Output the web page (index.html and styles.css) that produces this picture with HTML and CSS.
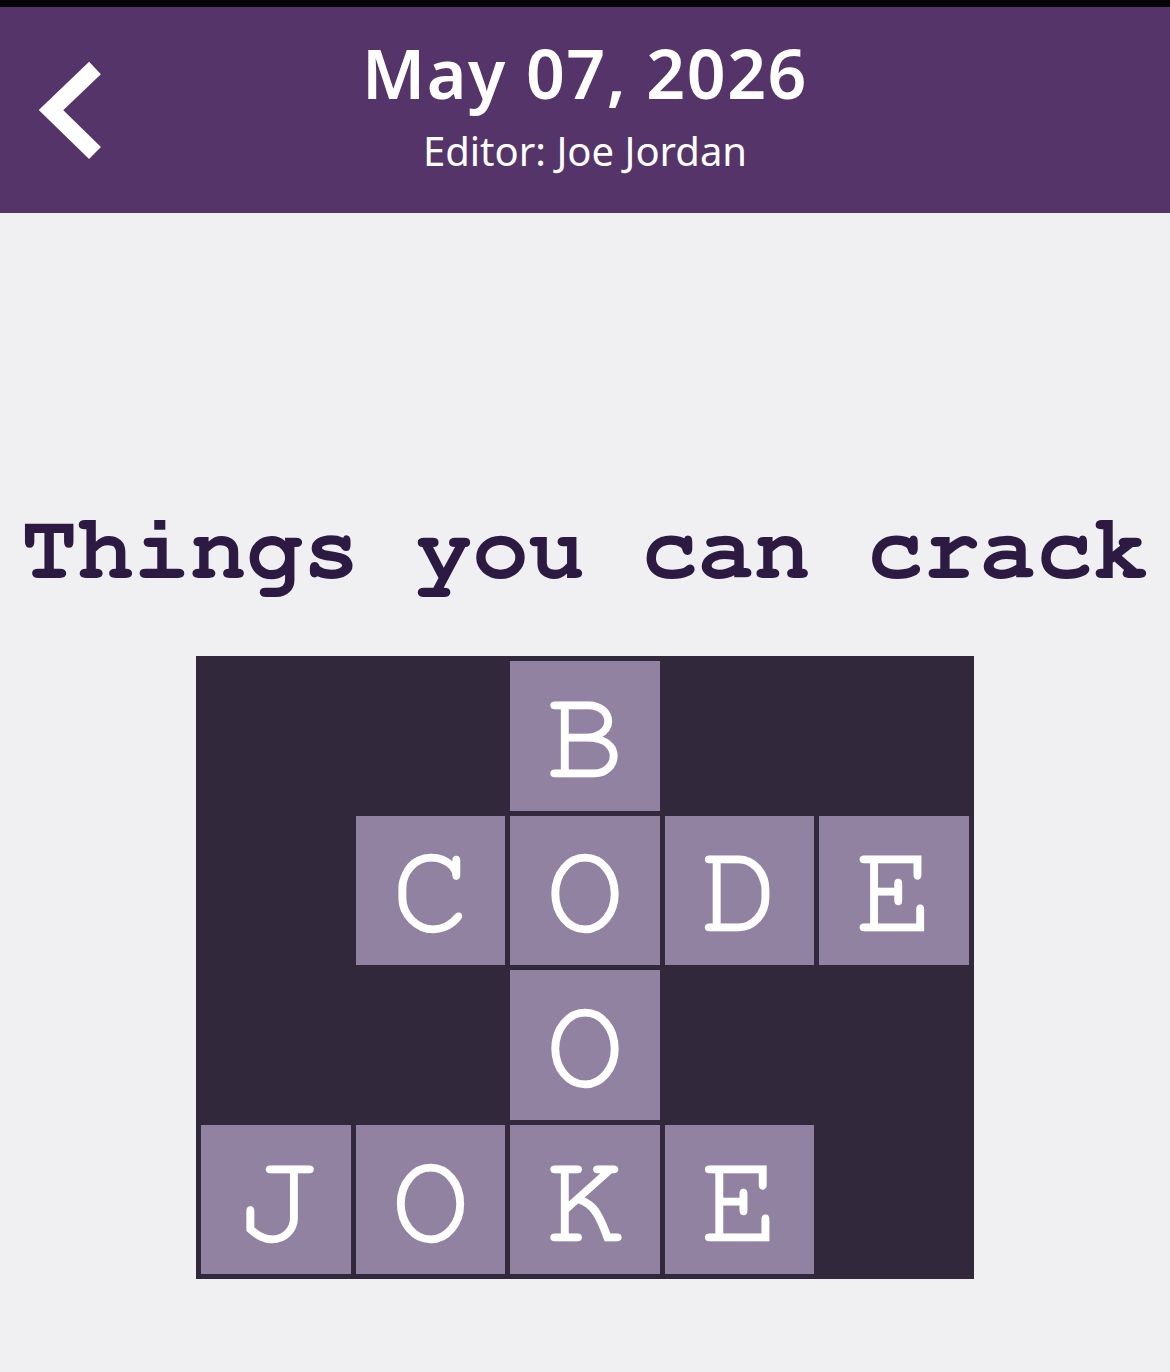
FILE: index.html
```html
<!DOCTYPE html>
<html>
<head>
<meta charset="utf-8">
<link rel="stylesheet" href="styles.css">
</head>
<body>
<div class="statusbar"></div>
<header class="header">
  <button class="back" aria-label="Back">
    <svg width="80" height="120" viewBox="0 0 80 120"><path d="M65 21 L21 63 L65 106" fill="none" stroke="#fff" stroke-width="17" stroke-linejoin="miter" stroke-linecap="butt"/></svg>
  </button>
  <div class="titles">
    <div class="date">May 07, 2026</div>
    <div class="editor">Editor: Joe Jordan</div>
  </div>
</header>
<main class="main">
  <h1 class="clue">Things you can crack</h1>
  <div class="grid">
    <div class="cell"></div><div class="cell"></div><div class="cell on">B</div><div class="cell"></div><div class="cell"></div>
    <div class="cell"></div><div class="cell on">C</div><div class="cell on">O</div><div class="cell on">D</div><div class="cell on">E</div>
    <div class="cell"></div><div class="cell"></div><div class="cell on">O</div><div class="cell"></div><div class="cell"></div>
    <div class="cell on">J</div><div class="cell on">O</div><div class="cell on">K</div><div class="cell on">E</div><div class="cell"></div>
  </div>
</main>
</body>
</html>
```

FILE: styles.css
```css
html, body {
  margin: 0;
  padding: 0;
  background: #f0f0f3;
}
body {
  width: 1170px;
  height: 1372px;
  overflow: hidden;
  font-family: "Noto Sans", sans-serif;
}
.statusbar {
  height: 7px;
  background: #050505;
}
.header {
  height: 206px;
  background: #55346a;
  position: relative;
  display: flex;
  justify-content: center;
  align-items: flex-start;
}
.back {
  position: absolute;
  left: 30px;
  top: 40px;
  background: none;
  border: 0;
  padding: 0;
  width: 80px;
  height: 120px;
}
.back svg { display: block; }
.titles {
  display: flex;
  flex-direction: column;
  align-items: center;
  color: #fff;
}
.date {
  font-size: 68px;
  font-weight: 600;
  line-height: 1;
  margin-top: 32px;
  letter-spacing: 1.5px;
}
.editor {
  font-size: 40px;
  font-weight: 400;
  line-height: 1;
  margin-top: 24px;
}
.main {
  display: flex;
  flex-direction: column;
  align-items: center;
}
.clue {
  margin: 290px 0 0 0;
  font-family: "Nimbus Mono PS", "Nimbus Mono L", "FreeMono", "Courier 10 Pitch", "Courier", "DejaVu Serif", serif;
  font-weight: 700;
  font-size: 94px;
  line-height: 1;
  color: #2c1a42;
  white-space: nowrap;
}
.grid {
  margin-top: 59px;
  width: 778px;
  box-sizing: border-box;
  padding: 5px;
  background: #32283c;
  display: grid;
  grid-template-columns: repeat(5, 1fr);
  grid-auto-rows: 149.6px;
  gap: 5px;
}
.cell.on {
  background: #9282a2;
  color: #fff;
  display: flex;
  align-items: center;
  justify-content: center;
  font-family: "Nimbus Mono PS", "Nimbus Mono L", "FreeMono", "Courier 10 Pitch", "Courier", "DejaVu Serif", serif;
  font-size: 130px;
  line-height: 1;
  padding-top: 2px;
  box-sizing: border-box;
  -webkit-text-stroke: 2.5px #fff;
}
```
